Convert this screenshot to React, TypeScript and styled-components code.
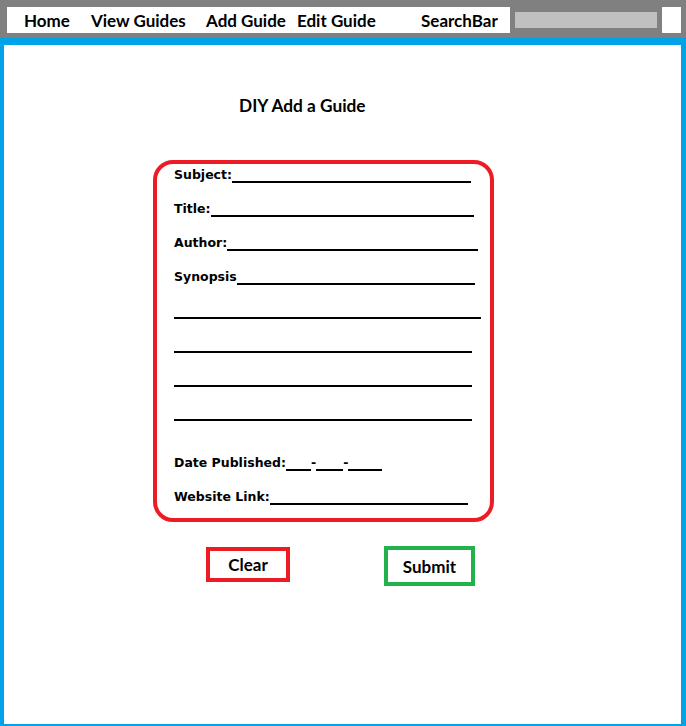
import React from 'react';
import styled, { createGlobalStyle } from 'styled-components';

const GlobalStyle = createGlobalStyle`
  html, body {
    margin: 0;
    padding: 0;
    background: #fff;
  }
  * {
    box-sizing: border-box;
  }
`;

const Page = styled.div`
  width: 686px;
  height: 726px;
  overflow: hidden;
  font-family: Lato, "Liberation Sans", sans-serif;
  color: #000;
`;

const NavOuter = styled.div`
  height: 38px;
  background: #808080;
  padding: 7px 5px 5px 7px;
`;

const NavBar = styled.nav`
  display: flex;
  align-items: flex-end;
  height: 26px;
  background: #fff;
  padding: 0 0 2px 17px;
`;

const NavLink = styled.span<{ $width: number }>`
  width: ${(p) => p.$width}px;
  flex: none;
  font-size: 17px;
  font-weight: 700;
  line-height: 20px;
  white-space: nowrap;
`;

const SearchBox = styled.div`
  align-self: stretch;
  margin-bottom: -2px;
  width: 152px;
  border: 5px solid #808080;
  background: #c0c0c0;
`;

const Frame = styled.main`
  height: 688px;
  border-style: solid;
  border-color: #00a2e8;
  border-width: 7px 5px 2px 4px;
  padding: 50px 0 0 149px;
  display: flex;
  flex-direction: column;
  align-items: flex-start;
`;

const Title = styled.h1`
  margin: 0 0 43px 86px;
  font-size: 17.3px;
  font-weight: 700;
  line-height: 22px;
`;

const Card = styled.form`
  width: 341px;
  height: 362px;
  border: 4px solid #ed1c24;
  border-radius: 20px;
  padding: 0 0 0 17px;
  display: flex;
  flex-direction: column;
  gap: 15px;
  font-family: "DejaVu Sans", "Liberation Sans", sans-serif;
  font-size: 12.5px;
  font-weight: 700;
`;

const Row = styled.div<{ $width?: number; $top?: number }>`
  display: flex;
  align-items: flex-end;
  height: 19px;
  width: ${(p) => (p.$width ? `${p.$width}px` : 'auto')};
  margin-top: ${(p) => p.$top ?? 0}px;
`;

const Label = styled.label`
  flex: none;
  line-height: 14px;
  white-space: nowrap;
  margin-bottom: 1px;
`;

const Blank = styled.span<{ $w?: number }>`
  flex: ${(p) => (p.$w ? 'none' : '1')};
  width: ${(p) => (p.$w ? `${p.$w}px` : 'auto')};
  height: 0;
  border-bottom: 2px solid #000;
`;

const Dash = styled.span`
  flex: none;
  line-height: 14px;
  margin-bottom: 1px;
`;

const ButtonRow = styled.div`
  display: flex;
  align-items: flex-start;
  margin-top: 24px;
`;

const Button = styled.button<{ $color: string; $w: number; $h: number; $left: number; $top?: number }>`
  display: flex;
  align-items: center;
  justify-content: center;
  width: ${(p) => p.$w}px;
  height: ${(p) => p.$h}px;
  margin-left: ${(p) => p.$left}px;
  margin-top: ${(p) => p.$top ?? 0}px;
  padding: 0;
  border: 4px solid ${(p) => p.$color};
  background: #fff;
  font-family: Lato, "Liberation Sans", sans-serif;
  font-size: 17px;
  font-weight: 700;
  color: #000;
`;

const navItems = [
  { label: 'Home', width: 67 },
  { label: 'View Guides', width: 115 },
  { label: 'Add Guide', width: 91 },
  { label: 'Edit Guide', width: 124 },
  { label: 'SearchBar', width: 89 },
];

const fields = [
  { label: 'Subject:', width: 297 },
  { label: 'Title:', width: 300 },
  { label: 'Author:', width: 304 },
  { label: 'Synopsis', width: 301 },
];

const synopsisLines = [307, 298, 298, 298];

const App = () => (
  <Page>
    <GlobalStyle />
    <NavOuter>
      <NavBar>
        {navItems.map((item) => (
          <NavLink key={item.label} $width={item.width}>
            {item.label}
          </NavLink>
        ))}
        <SearchBox />
      </NavBar>
    </NavOuter>
    <Frame>
      <Title>DIY Add a Guide</Title>
      <Card>
        {fields.map((f) => (
          <Row key={f.label} $width={f.width}>
            <Label>{f.label}</Label>
            <Blank />
          </Row>
        ))}
        {synopsisLines.map((w, i) => (
          // eslint-disable-next-line react/no-array-index-key
          <Row key={i} $width={w}>
            <Blank />
          </Row>
        ))}
        <Row $top={16}>
          <Label>Date Published:</Label>
          <Blank $w={25} />
          <Dash>-</Dash>
          <Blank $w={27} />
          <Dash>-</Dash>
          <Blank $w={34} />
        </Row>
        <Row $width={294}>
          <Label>Website Link:</Label>
          <Blank />
        </Row>
      </Card>
      <ButtonRow>
        <Button type="button" $color="#ed1c24" $w={84} $h={35} $left={53} $top={1}>
          Clear
        </Button>
        <Button type="button" $color="#22b14c" $w={91} $h={40} $left={94}>
          Submit
        </Button>
      </ButtonRow>
    </Frame>
  </Page>
);

export default App;
